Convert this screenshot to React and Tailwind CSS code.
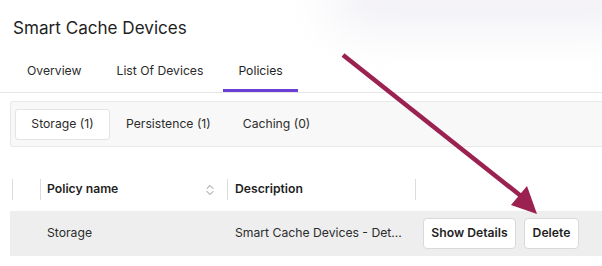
export default function App() {
  return (
    <div className="relative w-[602px] h-[266px] overflow-hidden bg-white text-[#1f1f1f]" style={{ fontFamily: 'Inter, "Noto Sans", sans-serif' }}>
      {/* soft shade in the top right corner */}
      <div className="absolute -top-6 left-[330px] w-[320px] h-[50px] rounded-full bg-[#efedf3] blur-xl" />

      <div className="relative">
        <h1 className="pl-[13px] pt-[16px] text-[17.1px] leading-[24px] font-normal">Smart Cache Devices</h1>

        {/* main tabs */}
        <div className="mt-[18px] flex gap-[5px] pl-[12px] border-b border-[#e6e6e9]">
          <div className="px-[15px] pb-[9px] pt-[4px] text-[12.2px] leading-[18px] text-[#2b2b2b] border-b-[3px] border-transparent">Overview</div>
          <div className="px-[15px] pb-[9px] pt-[4px] text-[12.2px] leading-[18px] text-[#2b2b2b] border-b-[3px] border-transparent">List Of Devices</div>
          <div className="px-[15px] pb-[9px] pt-[4px] text-[12.2px] leading-[18px] text-[#1f1f1f] border-b-[3px] border-[#6b3fd4]">Policies</div>
        </div>

        {/* sub tabs */}
        <div className="ml-[10px] mt-[8px] h-[46px] flex items-center gap-[2px] pl-[4px] bg-[#f8f8f8] border border-r-0 border-[#e8e8e8] rounded-l-[3px]">
          <div className="h-[31px] w-[95px] flex items-center justify-center bg-white border border-[#e4e4e4] rounded-[3px] text-[12.2px] text-[#2b2b2b]">Storage (1)</div>
          <div className="px-[14px] text-[12.2px] text-[#2b2b2b]">Persistence (1)</div>
          <div className="px-[16px] text-[12.2px] text-[#2b2b2b]">Caching (0)</div>
        </div>

        {/* table */}
        <div className="ml-[10px] mt-[23px]">
          <div className="h-[39px] flex items-center text-[12.2px] font-semibold text-[#1f1f1f]">
            <div className="w-[28px] h-[21px] border-l border-[#dcdcdc] ml-[2px]" />
            <div className="w-[187px] h-[21px] border-l border-[#dcdcdc] pl-[6px] pr-[13px] flex items-center justify-between">
              <span>Policy name</span>
              <svg width="8" height="12" viewBox="0 0 8 12" fill="none" stroke="#8a8a8a" strokeWidth="1" strokeLinecap="round" strokeLinejoin="round">
                <path d="M1 4.5 L4 1.5 L7 4.5" />
                <path d="M1 7.5 L4 10.5 L7 7.5" />
              </svg>
            </div>
            <div className="w-[188px] h-[21px] border-l border-[#dcdcdc] pl-[7px] flex items-center">Description</div>
            <div className="flex-1 h-[21px] border-l border-[#dcdcdc]" />
          </div>

          <div className="mt-[2px] h-[45px] flex items-center bg-[#eeeeee] text-[12.2px] text-[#2b2b2b]">
            <div className="w-[37px]" />
            <div className="w-[188px]">Storage</div>
            <div className="w-[170px] truncate">Smart Cache Devices - Details</div>
            <div className="ml-[18px] flex gap-[8px]">
              <button className="h-[31px] w-[93px] bg-white border border-[#d9d9d9] rounded-[4px] text-[12.2px] font-semibold text-[#1f1f1f]">Show Details</button>
              <button className="h-[31px] w-[55px] bg-white border border-[#d9d9d9] rounded-[4px] text-[12.2px] font-semibold text-[#1f1f1f]">Delete</button>
            </div>
          </div>
        </div>
      </div>

      {/* annotation arrow */}
      <svg className="absolute inset-0 pointer-events-none" width="602" height="266" viewBox="0 0 602 266">
        <line x1="343" y1="55" x2="521" y2="196" stroke="#9a2150" strokeWidth="4.5" />
        <polygon points="537,214 511,205 527,186" fill="#9a2150" />
      </svg>
    </div>
  )
}
